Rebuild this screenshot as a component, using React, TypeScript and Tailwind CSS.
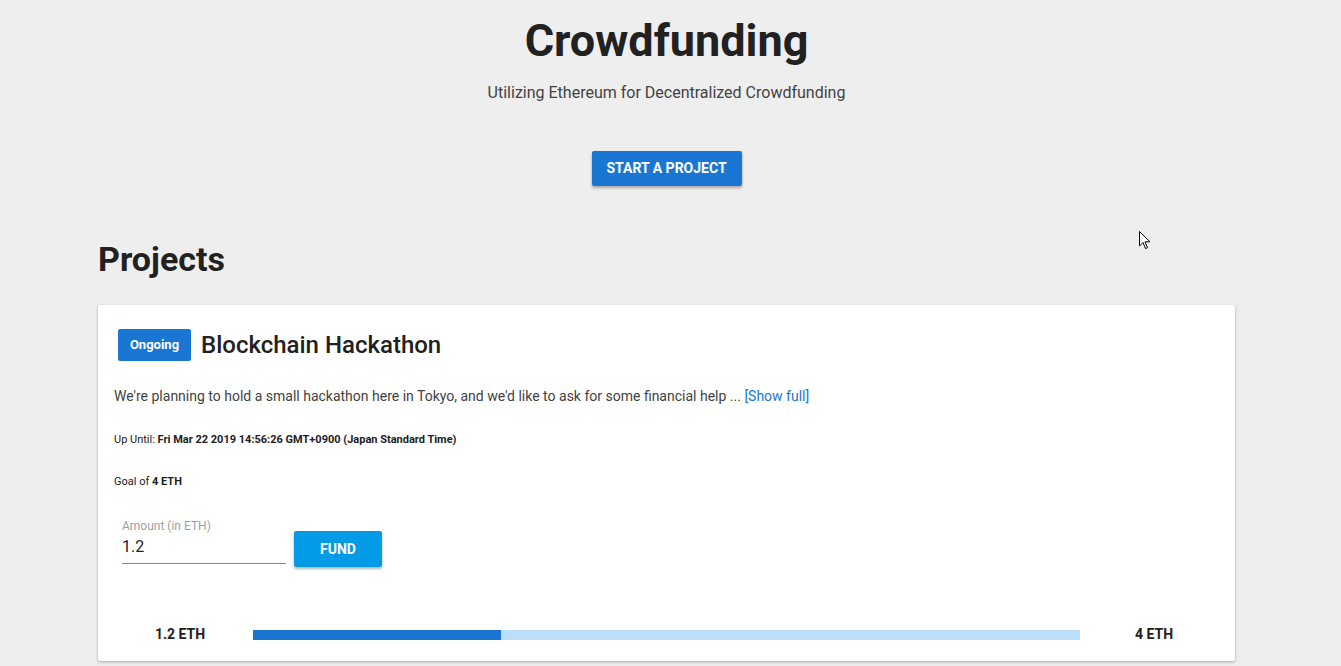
import React from "react";

export default function App() {
  return (
    <div className="min-h-[666px] w-full bg-[#eeeeee] overflow-hidden" style={{ fontFamily: "Roboto, 'Liberation Sans', sans-serif" }}>
      <div className="w-[1333px] relative">
        <div className="flex flex-col items-center pt-[13px]">
          <h1 className="text-[45px] leading-[56px] font-bold text-[#212121]">Crowdfunding</h1>
          <p className="mt-[12px] text-[16px] leading-[24px] text-[#424242]">Utilizing Ethereum for Decentralized Crowdfunding</p>
          <button className="mt-[46px] h-[35px] w-[150px] rounded-[2px] bg-[#1976d2] text-white text-[14px] font-bold uppercase shadow-[0_2px_3px_rgba(0,0,0,0.3)]">
            Start a Project
          </button>
        </div>
        <div className="mx-auto w-[1137px]">
          <h2 className="mt-[51px] text-[34px] leading-[44px] font-bold text-[#212121]">Projects</h2>
          <div className="mt-[24px] bg-white h-[356px] shadow-[0_1px_3px_rgba(0,0,0,0.3)] rounded-[2px] pt-[24px]">
            <div className="flex items-center h-[32px] pl-[20px]">
              <span className="h-[32px] w-[73px] flex items-center justify-center rounded-[2px] bg-[#1976d2] text-white text-[13px] font-bold">Ongoing</span>
              <span className="ml-[10px] text-[24px] leading-[32px] font-medium text-[#212121]">Blockchain Hackathon</span>
            </div>
            <p className="mt-[25px] pl-[16px] text-[14px] leading-[20px] text-[#424242]">
              We're planning to hold a small hackathon here in Tokyo, and we'd like to ask for some financial help ... <span className="text-[#1976d2]">[Show full]</span>
            </p>
            <p className="mt-[27px] pl-[16px] text-[11px] leading-[14px] text-[#212121]">
              Up Until: <b>Fri Mar 22 2019 14:56:26 GMT+0900 (Japan Standard Time)</b>
            </p>
            <p className="mt-[28px] pl-[16px] text-[11px] leading-[14px] text-[#212121]">
              Goal of <b>4 ETH</b>
            </p>
            <div className="mt-[30px] pl-[24px] flex items-start">
              <div className="w-[164px] border-b border-[#8a8a8a]">
                <div className="text-[12px] leading-[14px] text-[#9e9e9e]">Amount (in ETH)</div>
                <div className="mt-[2px] text-[16px] leading-[24px] text-[#212121] pb-[4px]">1.2</div>
              </div>
              <button className="ml-[8px] mt-[12px] h-[36px] w-[88px] rounded-[2px] bg-[#039be5] text-white text-[14px] font-bold shadow-[0_2px_3px_rgba(0,0,0,0.3)]">
                FUND
              </button>
            </div>
            <div className="mt-[57px] flex items-center">
              <div className="w-[155px] pl-[57px] text-[14px] font-bold text-[#212121]">1.2 ETH</div>
              <div className="w-[827px] h-[10px] bg-[#bbdefb]">
                <div className="h-full bg-[#1976d2]" style={{ width: "30%" }} />
              </div>
              <div className="flex-1 text-[14px] font-bold text-[#212121] pl-[55px]">4 ETH</div>
            </div>
          </div>
        </div>
        <svg className="absolute left-[1139px] top-[231px]" width="14" height="20" viewBox="0 0 14 20">
          <path d="M0.5 0.5 L0.5 15 L4 11.5 L6.5 17.5 L8.5 16.7 L6 10.8 L11 10.8 Z" fill="white" stroke="black" strokeWidth="1" />
        </svg>
      </div>
    </div>
  );
}
